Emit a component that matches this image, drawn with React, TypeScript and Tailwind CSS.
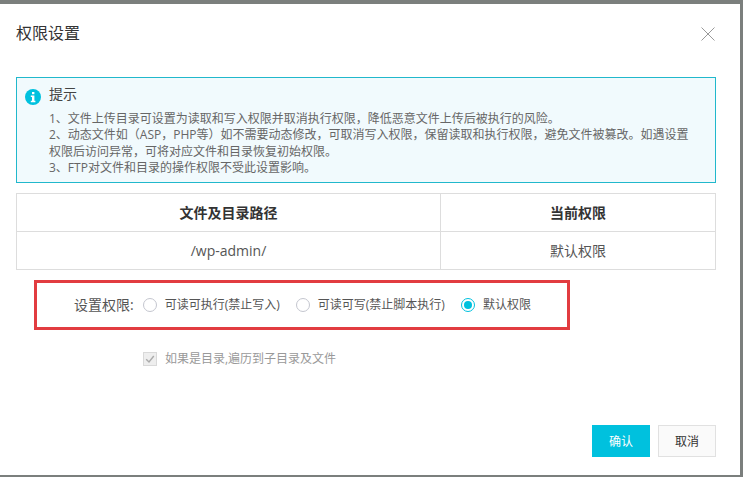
const font = { fontFamily: '"Open Sans", "Noto Sans CJK SC", sans-serif' };

const RadioOption = ({ label, checked, className }: { label: string; checked?: boolean; className?: string }) => (
  <label className={`flex items-center ${className ?? ''}`}>
    <span
      className={`flex h-[14px] w-[14px] items-center justify-center rounded-full border bg-white ${
        checked ? 'border-[#00c1de]' : 'border-[#c4c6cf]'
      }`}
    >
      {checked && <span className="h-2 w-2 rounded-full bg-[#00c1de]" />}
    </span>
    <span className="ml-2 text-xs text-[#555]">{label}</span>
  </label>
);

export default function App() {
  return (
    <div style={font} className="flex h-[477px] w-[743px] flex-col overflow-hidden bg-white">
      <div className="h-1 shrink-0 bg-[#7b7f7d]" />
      <div className="flex flex-1 min-h-0">
        <div className="flex w-[740px] flex-col bg-white pl-4 pr-6">
          {/* Header */}
          <div className="flex h-[73px] shrink-0 items-start justify-between">
            <h1 className="mt-[18px] text-base leading-[22px] text-[#333]">权限设置</h1>
            <svg viewBox="0 0 14 14" className="mr-px mt-[23px] h-[14px] w-[14px]">
              <path d="M.5.5l13 13M13.5.5l-13 13" fill="none" stroke="#999" strokeWidth="1" />
            </svg>
          </div>

          {/* Notice */}
          <div className="h-[106px] shrink-0 border border-[#21b8cc] bg-[#f1fafd] pl-[8px] pt-[6px]">
            <div className="flex items-start">
              <svg viewBox="0 0 16 16" className="mt-[5px] h-4 w-4 shrink-0">
                <circle cx="8" cy="8" r="8" fill="#00c1de" />
                <rect x="7" y="3" width="2.4" height="2.2" fill="#fff" />
                <path d="M5.8 6.6h3.6v5.2h1v1.4H5.8v-1.4h1.2V8H5.8z" fill="#fff" />
              </svg>
              <span className="ml-2 text-sm leading-[20px] text-[#444]">提示</span>
            </div>
            <div className="mt-[6px] pl-[24px] pr-[24px] text-xs leading-[16.4px] text-[#666]">
              <p>1、文件上传目录可设置为读取和写入权限并取消执行权限，降低恶意文件上传后被执行的风险。</p>
              <p>2、动态文件如（ASP，PHP等）如不需要动态修改，可取消写入权限，保留读取和执行权限，避免文件被篡改。如遇设置权限后访问异常，可将对应文件和目录恢复初始权限。</p>
              <p>3、FTP对文件和目录的操作权限不受此设置影响。</p>
            </div>
          </div>

          {/* Path table */}
          <table className="mt-[10px] w-full shrink-0 border-collapse text-sm text-[#333]">
            <tbody>
              <tr className="h-[38px]">
                <th className="w-[424px] border border-[#ddd] font-bold">文件及目录路径</th>
                <th className="border border-[#ddd] font-bold">当前权限</th>
              </tr>
              <tr className="h-[38px]">
                <td className="border border-[#ddd] text-center text-[#555]">/wp-admin/</td>
                <td className="border border-[#ddd] text-center text-[#555]">默认权限</td>
              </tr>
            </tbody>
          </table>

          {/* Permission radios */}
          <div className="ml-[18px] mt-[10px] flex h-[50px] w-[536px] shrink-0 items-center border-[3px] border-[#e23c40] pl-[37px]">
            <span className="mr-[9px] text-sm text-[#555]">设置权限:</span>
            <div className="flex">
              <RadioOption label="可读可执行(禁止写入)" />
              <RadioOption label="可读可写(禁止脚本执行)" className="ml-[16px]" />
              <RadioOption label="默认权限" className="ml-[16px]" checked />
            </div>
          </div>

          {/* Recursive option */}
          <label className="ml-[127px] mt-[21px] flex shrink-0 items-center">
            <span className="flex h-[14px] w-[14px] items-center justify-center border border-[#d9d9d9] bg-[#eee]">
              <svg viewBox="0 0 12 12" className="h-3 w-3">
                <path d="M2.2 6.2 5 9l4.8-6" fill="none" stroke="#aaa" strokeWidth="1.4" />
              </svg>
            </span>
            <span className="ml-2 text-xs text-[#999]">如果是目录,遍历到子目录及文件</span>
          </label>

          {/* Footer */}
          <div className="mt-[58px] flex shrink-0 justify-end gap-2">
            <button className="h-8 w-[58px] bg-[#00c1de] pt-0.5 text-xs text-white">确认</button>
            <button className="h-8 w-[58px] border border-[#e1e1e1] bg-[#fafafa] pt-0.5 text-xs text-[#333]">取消</button>
          </div>
        </div>
        <div className="w-[3px] shrink-0 bg-[#7b7f7d]" />
      </div>
      <div className="h-[2px] shrink-0 bg-[#7b7f7d]" />
    </div>
  );
}
